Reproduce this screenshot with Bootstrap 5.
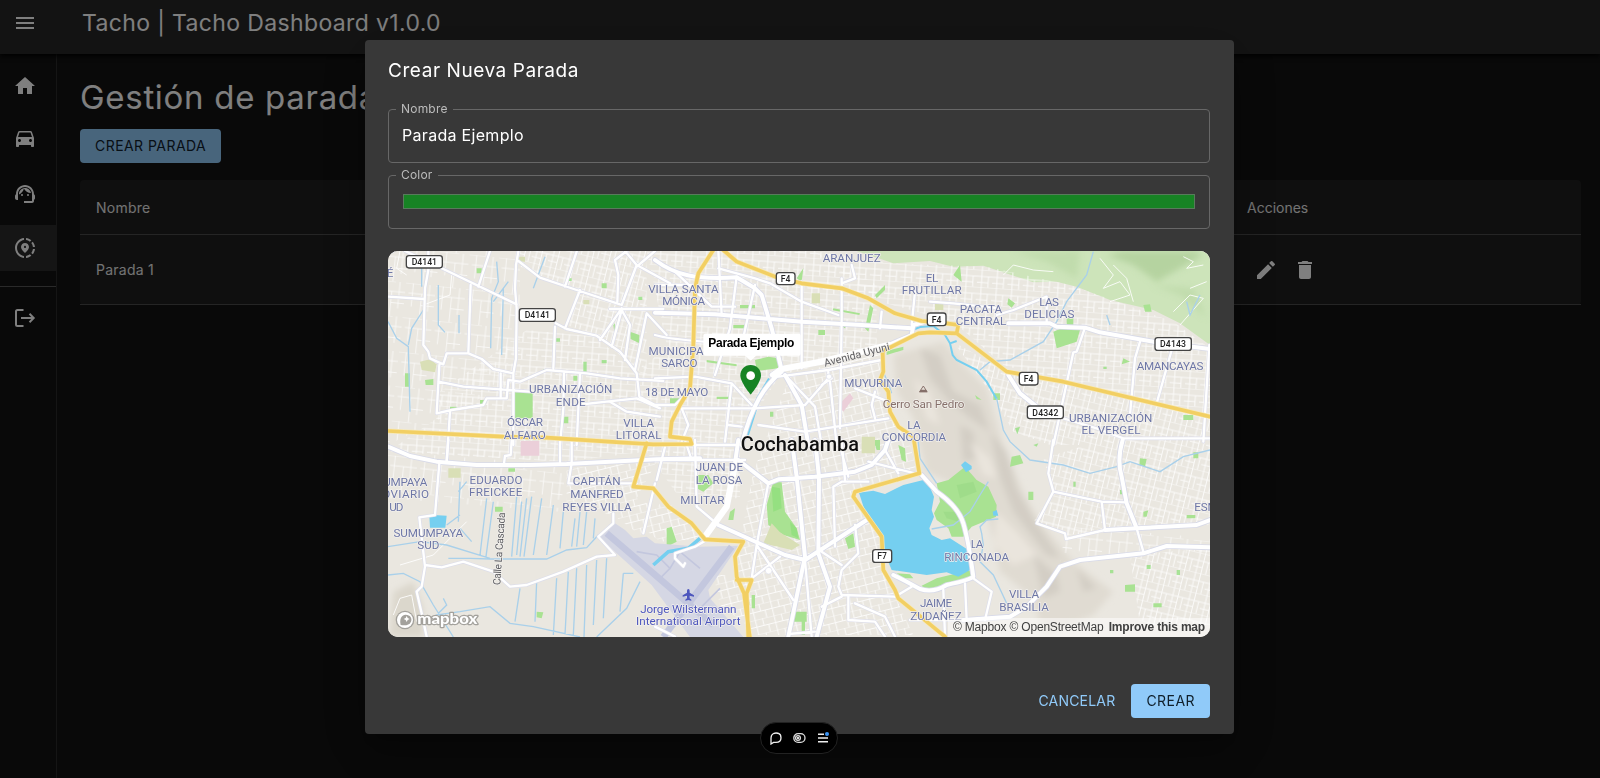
<!DOCTYPE html>
<html lang="es">
<head>
<meta charset="utf-8">
<meta name="viewport" content="width=device-width, initial-scale=1">
<title>Tacho Dashboard</title>
<link rel="stylesheet" href="https://cdn.jsdelivr.net/npm/bootstrap@5.3.0/dist/css/bootstrap.min.css">
<script defer src="https://cdn.jsdelivr.net/npm/bootstrap@5.3.0/dist/js/bootstrap.bundle.min.js"></script>
<style>
body{background:#121212;color:#fff;font-family:Inter,sans-serif;font-size:14px;height:778px;overflow:hidden}
svg{display:block;flex:none}
.topbar{height:54px;background:#272727;box-shadow:0 2px 5px #000;padding-left:13px;position:relative;z-index:1}
.brand{font-size:23px;letter-spacing:.36px;margin-left:45px;line-height:46px;height:54px;white-space:nowrap}
.shell{height:724px}
.side{width:57px;border-right:1px solid #2b2b2b;padding-top:9px;gap:8px}
.side a{height:46px;padding-left:13px;color:#fff}
.side a.on{background:#2a2a2a}
.side hr{margin:7px 0 0;border-color:#555;opacity:1;border-top-width:1px}
.page{padding:23px 19px 0 23px}
.page h1{font-size:33px;font-weight:400;line-height:41px;margin:0 0 11px;letter-spacing:.7px;white-space:nowrap}
.mbtn{border-radius:4px;border:0;font-size:14px;font-weight:400;line-height:24px;padding:5px 15px;white-space:nowrap}
.solid{background:#90caf9;color:#10202c;letter-spacing:.45px}
.ghost{color:#90caf9;background:none;letter-spacing:.2px;padding-right:16px}
.grid-t{background:#1e1e1e;border-radius:4px;margin-top:17px;height:125px;color:#e6e6e6}
.grid-t>div{padding:0 16px;border-bottom:1px solid #4a4a4a}
.grid-t .c1{width:1151px;letter-spacing:.25px}
.mask{position:fixed;inset:0;background:rgba(0,0,0,.5);z-index:5}
.dlg{position:absolute;left:365px;top:40px;width:869px;height:694px;background:#383838;border-radius:4px;padding:0 24px 16px 23px;box-shadow:0 11px 15px -7px rgba(0,0,0,.2),0 24px 38px 3px rgba(0,0,0,.14),0 9px 46px 8px rgba(0,0,0,.12)}
.dlg h2{font-size:19px;font-weight:400;line-height:24px;margin:0;padding:19px 0 26px;letter-spacing:.56px}
.field{height:54px;border:1px solid #676767;border-radius:4px;padding:0 13px;position:relative}
.field label{position:absolute;top:-10px;left:7px;padding:0 5px;background:#383838;color:#bcbcbc;font-size:12px;line-height:18px;letter-spacing:.2px}
#stopName{font-size:16px;letter-spacing:.3px;margin-top:-2px}
.swatch{height:15px;background:#178324;border:1px solid #587a5c;margin:-2px 1px 0}
.mapbox{height:386px;margin-top:22px;border-radius:10px;overflow:hidden;position:relative;background:#eae7e0}
.attrib{position:absolute;right:0;bottom:0;height:19px;padding:0 5px;background:rgba(255,255,255,.5);color:#404040;font:12px/18px "Liberation Sans",sans-serif;letter-spacing:-.19px;white-space:nowrap}
.pill{position:absolute;left:760px;top:722px;width:78px;height:32px;background:#000;border:1px solid #222;border-radius:16px;gap:11px}
.pl text{font-family:Roboto,sans-serif;font-size:35px;fill:#6e77a6;text-anchor:middle;stroke:#f3f1ee;stroke-width:4px;paint-order:stroke;stroke-linejoin:round}
.sh rect{fill:#fff;stroke:#444;stroke-width:4}
.sh text{font:500 26px Roboto,sans-serif;fill:#222;text-anchor:middle}
</style>
</head>
<body>
<header class="topbar d-flex">
 <svg width="24" height="24" viewBox="0 0 24 24" fill="#fff" style="margin-top:11px"><path d="M3 18h18v-2H3zm0-5h18v-2H3zm0-7v2h18V6z"/></svg>
 <div class="brand">Tacho | Tacho Dashboard v1.0.0</div>
</header>
<div class="shell d-flex">
 <nav class="side d-flex flex-column">
  <a class="d-flex align-items-center"><svg width="24" height="24" viewBox="0 0 24 24" fill="currentColor"><path d="M10 20v-6h4v6h5v-8h3L12 3 2 12h3v8z"/></svg></a>
  <a class="d-flex align-items-center pb-1"><svg width="24" height="24" viewBox="0 0 24 24" fill="currentColor"><path d="M18.92 6.01C18.72 5.42 18.16 5 17.5 5h-11c-.66 0-1.21.42-1.42 1.01L3 12v8c0 .55.45 1 1 1h1c.55 0 1-.45 1-1v-1h12v1c0 .55.45 1 1 1h1c.55 0 1-.45 1-1v-8zM6.5 16c-.83 0-1.5-.67-1.5-1.5S5.67 13 6.5 13s1.500.67 1.500 1.500S7.330 16 6.500 16m11 0c-.83 0-1.500-.67-1.500-1.500s.67-1.500 1.500-1.500 1.500.67 1.500 1.500-.67 1.500-1.500 1.500M5 11l1.500-4.500h11L19 11z"/></svg></a>
  <a class="d-flex align-items-center"><svg width="24" height="24" viewBox="0 0 24 24" fill="currentColor"><path d="M21 12.22C21 6.73 16.74 3 12 3c-4.69 0-9 3.65-9 9.28-.6.34-1 .98-1 1.72v2c0 1.1.9 2 2 2h1v-6.1c0-3.87 3.13-7 7-7s7 3.13 7 7V19h-8v2h8c1.1 0 2-.9 2-2v-1.22c.59-.31 1-.92 1-1.64v-2.3c0-.7-.41-1.31-1-1.62"/><circle cx="9" cy="13" r="1"/><circle cx="15" cy="13" r="1"/><path d="M18 11.03C17.52 8.18 15.04 6 12.05 6c-3.03 0-6.29 2.51-6.03 6.45 2.47-1.01 4.33-3.21 4.86-5.89 1.31 2.63 4 4.44 7.12 4.47"/></svg></a>
  <a class="d-flex align-items-center on"><svg width="24" height="24" viewBox="0 0 24 24" fill="currentColor"><path d="M13.02 19.93v2.02c2.01-.2 3.84-1 5.32-2.21l-1.42-1.43c-1.11.86-2.44 1.44-3.9 1.62M4.03 12c0-4.05 3.03-7.41 6.95-7.93V2.05C5.95 2.58 2.03 6.84 2.03 12s3.92 9.42 8.95 9.95v-2.02c-3.92-.52-6.95-3.88-6.95-7.93m15.92-1h2.02c-.2-2.01-1-3.84-2.21-5.32l-1.43 1.43c.86 1.1 1.44 2.43 1.62 3.89m-1.61-6.74c-1.48-1.21-3.32-2.01-5.32-2.21v2.02c1.46.18 2.79.76 3.9 1.62zm-.01 12.64 1.43 1.42c1.21-1.48 2.01-3.31 2.21-5.32h-2.02c-.18 1.46-.76 2.79-1.62 3.9M16 11.1C16 8.61 14.1 7 12 7s-4 1.61-4 4.1c0 1.66 1.33 3.63 4 5.9 2.67-2.27 4-4.24 4-5.9m-4 .9c-.59 0-1.07-.48-1.07-1.07 0-.59.48-1.07 1.07-1.07s1.07.48 1.07 1.07c0 .59-.48 1.07-1.07 1.07"/></svg></a>
  <hr>
  <a class="d-flex align-items-center"><svg width="24" height="24" viewBox="0 0 24 24" fill="none" stroke="currentColor" stroke-width="2"><path d="M10.500 4H4.500Q3 4 3 5.500V18.500Q3 20 4.500 20H10.500M8 12H20M16.500 7.800 20.700 12l-4.200 4.200"/></svg></a>
 </nav>
 <main class="page flex-grow-1">
  <h1>Gestión de paradas</h1>
  <button class="mbtn solid" id="newStop">CREAR PARADA</button>
  <div class="grid-t d-flex flex-column">
   <div class="d-flex align-items-center" style="height:55px"><span class="c1">Nombre</span><span>Acciones</span></div>
   <div class="d-flex align-items-center" style="height:70px"><span class="c1">Parada 1</span><span class="d-flex" style="gap:15px;padding-left:7px">
    <svg width="24" height="24" viewBox="0 0 24 24" fill="#fff"><path d="M3 17.250V21h3.750L17.810 9.940l-3.750-3.750zM20.710 7.040c.39-.39.39-1.020 0-1.410l-2.340-2.340a.996.996 0 0 0-1.410 0l-1.830 1.830 3.750 3.750z"/></svg>
    <svg width="24" height="24" viewBox="0 0 24 24" fill="#fff"><path d="M6 19c0 1.100.9 2 2 2h8c1.100 0 2-.9 2-2V7H6zM19 4h-3.500l-1-1h-5l-1 1H5v2h14z"/></svg></span></div>
  </div>
 </main>
</div>

<div class="mask">
 <section class="dlg d-flex flex-column">
  <h2>Crear Nueva Parada</h2>
  <div class="field d-flex align-items-center"><label>Nombre</label><span id="stopName">Parada Ejemplo</span></div>
  <div class="field d-flex align-items-center" style="margin-top:12px"><label>Color</label><div class="swatch flex-grow-1"></div></div>
  <div class="mapbox">
  <svg width="822" height="386" viewBox="24 18 2466 1158">
   <defs>
    <pattern id="g1" width="46" height="52" patternUnits="userSpaceOnUse" patternTransform="rotate(4)"><path d="M0 0H46M0 20H46M14 0V52M34 20V52M0 38H34" stroke="#fff" stroke-width="3" fill="none"/></pattern>
    <pattern id="g2" width="58" height="44" patternUnits="userSpaceOnUse" patternTransform="rotate(-14)"><path d="M0 0H58M0 22H58M8 0V44M30 0V22M44 22V44" stroke="#fff" stroke-width="3" fill="none"/></pattern>
    <pattern id="g3" width="50" height="60" patternUnits="userSpaceOnUse" patternTransform="rotate(14)"><path d="M0 0H50M0 24H50M0 43H28M12 0V60M28 0V60M42 24V60" stroke="#fff" stroke-width="3" fill="none"/></pattern>
    <pattern id="g4" width="90" height="104" patternUnits="userSpaceOnUse" patternTransform="rotate(6)"><path d="M0 0H60M10 30H90M22 0V70M50 30V104M72 0V80M50 64H90" stroke="#fff" stroke-width="2.500" fill="none"/></pattern>
    <filter id="soft" x="-20%" y="-20%" width="140%" height="140%"><feGaussianBlur stdDeviation="10"/></filter>
    <g id="mid">
     <path d="M24 155 132 162M145 20V75L135 130 130 300 145 320 150 340 190 358 200 325 265 325 305 342 340 372 400 385 408 340 410 190 405 130 408 60 415 20M75 18 190 72 410 178M527 235 560 252 650 272 720 320 770 385 778 455 825 480M272 120 265 325M330 18 295 125M415 48 480 98 590 135 720 178M590 20 555 125M600 135 555 250M525 245 520 370M740 18 705 45 715 90 712 170M770 60 725 180M735 18 770 60 870 115M825 18 770 65M690 192H850M725 190 660 285M725 195 695 305M725 195 750 240 735 345M800 205 765 375M178 360 170 505 215 495 310 480 320 460 380 460 385 405 420 410 500 375 620 385 720 400 850 408M175 410 250 425 450 440M362 385V455M400 385V600M552 380 550 490 540 600M600 385 590 600M210 500 200 650M24 25 40 18M590 480 680 470 770 460 840 490M690 470 740 500 840 515M800 205 860 270"/>
     <g transform="translate(0 585)"><path d="M178 70 165 225 118 232 135 380 125 440 110 455 125 520 140 590M205 0 200 65M395 0 392 45 375 48 372 70M540 0V70M575 0V70L565 130 770 130M825 130 790 280M135 375 185 382 250 365 340 395 390 440 440 435 550 395 650 350 705 345 655 290 700 250 700 220"/></g>
     <g transform="translate(825 0)"><path d="M190 70 300 100 345 115 440 170 550 210M245 95 225 250 180 390M560 100V220L555 550M440 110V370M0 270C50 285 200 295 340 300M680 200 675 250M370 395 520 375 680 345M0 400 120 395 230 415 290 480M80 490 300 490 450 480 520 400M0 480H60L100 440M230 415 210 590M60 80 170 185 240 185M520 380V400M525 410 545 600M500 420 530 400M310 540 450 560 700 520M660 440 650 480 660 520M390 390 480 485 500 600M0 120H120M200 210 190 18M300 120 260 300M590 60 600 100 560 115M600 430 700 470M80 490 100 540 80 590M220 540 260 545M780 140 770 240"/></g>
     <g transform="translate(825 585)"><path d="M0 60H270M90 15H250M340 130 305 315 290 415M120 0 125 200 190 255M90 0 110 60M550 0 580 110M540 320 535 140 560 125 640 125M600 255 610 340 560 390 550 440 560 465 720 470M305 315 415 480M375 350 290 415M500 335 560 375M450 360 470 590M400 582 480 575M580 470V540L660 545 690 590M600 490 690 530 720 590M560 0 570 120M720 470 770 440M5 120 30 20M155 300 120 320 60 340 60 355 85 380 90 370M640 65 780 100M690 30 730 100M500 500 560 470M0 560 60 590"/></g>
     <g transform="translate(1650 0)"><path d="M0 170 70 175 210 190M200 210 250 195 350 155V230M630 290 615 340 600 510M725 315 680 475M838 300 820 590M465 248 440 320 430 322 370 600M400 520 500 550 580 580H840M580 580 575 600"/></g>
     <g transform="translate(1650 585)"><path d="M130 415 185 455 165 540M370 0 355 100 370 155 515 185 590 187M370 155 320 250 405 280 408 297 525 270 620 265M515 185 525 270M105 430 110 540M40 450 45 590M-60 540 100 540M620 265 640 335"/></g>
    </g>
    <g id="big">
     <path d="M24 605 90 633 170 650 290 660 450 660 560 657 830 643 960 640"/>
     <g transform="translate(825 0)"><path d="M0 45C60 90 120 105 245 97L300 130 320 150 350 250 380 375M0 203 180 208 440 230 620 240 770 250M380 380C330 420 290 480 260 600M390 390 440 480 460 600M350 390 380 372 500 350 700 300 770 270 775 240 830 225"/></g>
     <g transform="translate(825 585)"><path d="M250 60 340 130 370 118 480 110 600 95 650 75 690 30 700 0M410 0 425 110 450 350 400 590M480 0 492 110 490 340 525 440 485 590M190 255 390 345 450 360 635 240M250 0 240 70 215 200 150 290"/></g>
     <path d="M1885 390 1920 445 1970 485M1885 235H2010L2030 245 2115 248 2160 262 2320 290 2490 312"/>
     <path d="M1625 690 1670 740Q1735 785 1750 835T1780 995Q1770 1005 1700 1020 1660 1045 1620 1032 1580 1010 1540 990"/>
     <g transform="translate(1650 585)"><path d="M100 540 240 530 290 500 350 440 390 380 450 360 640 340 710 318 840 322M578 0Q560 60 575 110L590 190 620 265 800 255 840 240M525 270 620 265"/></g>
    </g>
    <g id="hwy">
     <path d="M24 558 370 575 500 578 720 592 820 598 935 597 930 582 870 575 875 530 900 480 930 430 940 300 945 130 955 85 1000 15M800 595 760 725 820 730 865 785 935 835 975 883 1090 890 1065 935 1070 995 1092 1045 1110 1180M1070 1005H1115L1100 1045 1105 1180"/>
     <path d="M1030 15 1070 50 1185 95 1265 115 1385 130 1465 160 1545 205 1625 228 1700 235 1735 240 1730 265 1880 380 2050 410 2490 515M1730 265 1650 262 1615 265 1525 310 1508 318 1510 380 1500 405 1525 440 1530 500 1555 545 1600 575 1618 685 1425 740 1420 755 1505 875 1510 975 1545 1035 1555 1060 1695 1175"/>
    </g>
   </defs>
   <path fill="#eae7e0" d="M24 18H2490V1176H24z"/>
   <!-- relief -->
   <g filter="url(#soft)">
    <path fill="#e0dbd2" d="M1540 330 1690 290 1750 360 1820 430 1870 600 1930 740 1980 830 2080 950 2200 1040 2140 1110 1990 1176 1960 1060 1860 980 1810 760 1640 680 1600 520 1550 440z"/>
    <path fill="#d3cec5" d="M1620 310 1680 330 1720 440 1800 480 1830 560 1770 520 1700 460 1650 400zM1740 540 1780 560 1790 640 1750 650zM1830 560 1880 620 1910 730 1960 820 2040 940 2000 930 1900 800 1860 700zM1960 930 2030 990 2040 1040 1990 1060zM2090 970 2150 1030 2110 1040z"/>
    <path fill="#eae5dd" d="M1600 400 1650 440 1680 540 1640 520zM1770 590 1830 640 1850 700 1810 690zM1850 800 1910 860 1970 930 1900 960 1840 900z"/>
    <path fill="#dbd7cc" d="M40 1040 100 1010 130 1090 130 1176 30 1176z"/>
   </g>
   <path fill="#cde4ba" d="M1430 18H2490V300L2400 235 2320 195 2190 165 2090 125 2030 110 1960 112 1810 62 1720 65 1650 48 1540 55z"/>
   <g filter="url(#soft)" fill="#b5d3a0"><path d="M2180 30 2260 60 2330 110 2400 70 2470 30 2440 18H2230z"/><path d="M1900 20 2000 50 2090 100 2100 18z" opacity=".5"/><path d="M2320 120 2400 150 2480 220 2440 130z" opacity=".5"/></g>
   <!-- side streets -->
   <g opacity=".8">
    <path fill="url(#g1)" d="M440 255 650 275 770 390 860 300 800 18 1300 18 1490 120 1490 320 1200 390 1080 580 1080 760 900 760 800 620 550 650 24 620 170 520 180 440z"/>
    <path fill="url(#g3)" d="M420 18H800V400L650 270 560 240 590 140 410 60z"/>
    <path fill="url(#g2)" d="M1230 390 1500 320 1500 440 1590 600 1610 680 1420 740 1510 880 1520 1000 1600 1170 1100 1170 1070 940 1120 680z"/>
    <path fill="url(#g3)" d="M1880 380 2490 520V600H2010L1900 560 1830 440 1720 290zM1990 640 2120 600 2490 600V840L2060 870 1960 830 2020 740zM2250 930 2490 910V1140H2280z"/>
    <path fill="url(#g1)" d="M1300 18 1540 55 1820 65 2070 120 2380 230 2490 310V510L2040 410 1870 360 1720 230 1500 170z"/>
    <path fill="url(#g4)" d="M24 18H420V400L24 600zM24 620 560 660 540 800 24 760zM2060 840 2490 880V920L2040 950z"/>
    <path fill="url(#g2)" d="M850 760 990 880 840 890 790 850zM560 670 830 650 770 760 850 800 780 870 700 810 560 780zM1000 990 1070 990 1100 1140 1020 1080z"/>
   </g>
   <g fill="none" stroke="#fff" stroke-width="3" opacity=".85"><path d="M2160 40 2200 90 2170 130 2220 110 2250 150 2190 170M2200 60 2240 100 2260 170M2380 200 2430 150 2470 160 2400 240M2430 130 2480 110M2410 35 2440 50 2420 70 2470 60M60 18 50 70 80 90M130 180 210 150 215 90M1870 90 1900 60 1960 75 2020 80M40 1110 60 1060 95 1050 110 1130M60 960 160 930 260 830"/></g>
   <!-- parks -->
   <path fill="#a9e292" d="M405 442H458V520H405zM1125 345 1165 335 1195 340 1195 370 1130 378zM1180 710 1205 712 1215 800 1250 850 1260 885 1210 870 1165 840 1160 780zM1670 715 1705 705 1755 665 1790 705 1825 725 1850 780 1848 815 1775 845 1750 875 1715 875 1705 850 1670 825 1662 805 1680 770zM950 690 985 690 1000 715 970 740 950 730zM2020 260 2045 250 2100 255 2090 290 2030 310zM75 385H90V425H75zM135 405 160 402V420H137zM345 785H368V800H345zM750 260 778 270V295L752 282zM860 850 875 845 890 890 860 905zM1395 880 1420 865 1425 905 1405 912zM1080 180H1125V190H1080zM1250 100 1270 70 1265 110zM1470 180 1480 190 1465 260 1455 250zM1485 150 1515 120 1515 135 1490 160zM1360 190 1440 205 1438 210 1358 196zM1315 255H1335V270H1315zM1060 240H1100V250H1060zM980 345 1070 358 1070 364 980 352zM1720 90 1740 60 1745 110zM1885 160 1905 175 1895 188 1882 178zM1520 318 1570 305 1570 315 1520 330zM1480 585H1500V615H1490zM1055 455H1010V462H1055zM870 460H900V478H870zM1555 600 1575 610 1578 650 1565 645zM1115 1050H1125V1090H1115zM1550 985 1590 988 1600 1000 1570 1000zM1625 1022 1670 1000 1710 990 1775 975V1000L1700 1015 1640 1040zM2280 640 2300 642 2295 665 2278 660zM1945 740H1960V765H1945zM2235 1020 2265 1018V1040H2235zM2420 810H2446V820H2420zM2290 800 2305 796 2300 815H2290zM2320 1075H2345V1087H2320zM2440 622H2455V640H2440zM2410 510H2440V525H2410zM2230 340 2250 350 2225 358zM1785 450 1805 465 1790 462zM1840 445H1860V465H1840zM2290 180 2310 178 2315 200 2295 200zM2060 220H2080V240H2060zM290 70H305V85H290zM665 115H680V130H665zM550 515H565V535H550zM580 392H592V407H580zM470 1100 490 1102 485 1120 470 1117zM945 920 965 915 970 930 950 940zM385 670H405V680H385zM1230 1100H1280V1130H1230zM1265 1130H1275V1170H1265zM1050 800 1065 790 1060 825 1045 825zM210 485H230V492H210zM300 465H312V478H300zM1895 635 1920 630 1930 655 1890 665z"/>
   <path fill="#9ad985" opacity=".6" d="M1730 720 1780 710 1790 740 1740 760zM1690 800 1740 800 1735 830 1700 820z"/>
   <g fill="#8fdf7b" opacity=".75"><path d="M1175 725 1200 730 1205 790 1180 800zM1230 830 1250 850 1255 880 1235 870zM665 345H680V355H665zM490 372H500V380H490zM610 350H620V380H610zM520 280H540V290H520zM775 155H787V165H775zM560 100H575V108H560zM700 240 705 235 703 260zM1305 650H1315V665H1305zM1380 240 1400 238 1395 250zM1170 500H1180V515H1170zM2170 365H2180V372H2170zM2220 735H2230V748H2220zM2080 710H2087V725H2080zM2390 975H2400V990H2390zM2300 960H2312V972H2300zM2190 975H2200V985H2190zM1960 600 1975 595 1970 605zM1905 550 1920 545 1912 568z"/></g>
   <path fill="#d9dfb6" d="M120 350 150 343 170 358 165 382 125 375zM1175 835 1200 862 1260 900 1235 915 1150 895zM205 670H242V698H205zM415 35H435V50H415zM1445 575H1485V625H1445zM1295 145H1320V175H1295zM610 165H628V178H610zM1665 170H1690V195H1665zM1095 1070H1110V1080H1095z"/>
   <path fill="#ebcfd9" d="M422 588H478V632H422zM1375 480 1410 445 1420 460 1390 500z"/>
   <!-- airport -->
   <path fill="#d5d7e4" d="M655 875 705 835 735 855 760 880 800 875 825 895 960 905 1075 902 985 1035 990 1060 1090 1176H930L815 1020z"/>
   <path fill="none" stroke="#c3c7de" stroke-width="20" d="M680 865 1000 1140M1055 905 850 1176"/>
   <path fill="none" stroke="#c3c7de" stroke-width="5" d="M770 920 830 930 870 970 900 920 960 970M870 970 840 1000M960 1090 1020 1030"/>
   <!-- water -->
   <path fill="#75cff0" d="M1437 743 1480 737 1515 747 1570 720 1630 705 1645 715 1662 755 1655 795 1662 815 1648 850 1655 870 1685 885 1710 880 1765 915 1770 975 1735 995 1700 982 1640 990 1535 975 1510 915 1505 875 1460 815zM1743 660 1755 649 1775 663 1775 672 1758 682zM148 812 160 810 200 812 196 848H150zM1838 800 1850 795 1855 812 1840 812z"/>
   <g fill="none" stroke="#75cff0"><path stroke-width="13" d="M1170 402 1135 460 1100 570"/><path stroke-width="11" d="M820 960 865 920 925 910 960 880"/><path stroke-width="6" d="M1695 270 1710 295 1718 330 1730 345 1790 375 1820 410 1850 462M1590 258 1620 246 1660 243 1695 270M1710 295 1730 288"/></g>
   <g fill="none" stroke="#a9d0ea" stroke-width="4"><path d="M2140 20 2120 90 2060 170 2030 230 1990 290 1890 345 1830 350 1800 375M1850 460 1870 555 1890 590 1950 645 2050 660 2130 685 2210 665 2250 650 2340 680 2410 635 2490 615M1805 865 1800 845 1820 825 1855 822M1805 865 1810 900 1800 950 1840 990 1880 1075M1825 710 1800 750 1770 800 1720 840 1655 852M1615 590 1620 640 1670 715M1510 380 1530 430 1535 445"/><path d="M24 230 50 280 85 305 90 500M85 300 95 250 130 195M175 120V240L195 262M125 70V125M237 210V265M350 50 355 110 335 160 332 310M370 130 365 330M385 110 340 170M495 35 460 130M24 990 70 985 120 1010 160 1080 220 1176M205 940H270L330 942 500 942 560 915 620 908 655 870M320 760 300 930M340 770 318 935M410 755 395 935M425 770 410 930M440 760 420 935M455 755 432 935M485 760 460 930M520 780 500 930M550 800 540 910M585 820 575 905M600 800 590 905M620 800 610 900M645 820 640 880M420 1030 405 1130M470 1010 465 1130M530 1000 520 1170M565 980 555 1170M590 970 580 1170M620 960 612 1176M650 945 640 1140M680 940 670 1120M730 985 720 1100M780 1010 740 1090 650 1176M730 985H760M190 1060 200 1080 170 1110 240 1100 330 1085 390 1135 460 1145 600 1176M240 710 235 830M235 740 260 710M200 840 240 810M240 850 275 890M24 905 120 890 200 900 330 940M2180 210 2190 240M2420 170 2430 210 2460 150"/></g>
   <!-- roads -->
   <g fill="none" stroke-linejoin="round" stroke-linecap="round">
    <use href="#mid" stroke="#dddeea" stroke-width="11"/><use href="#big" stroke="#d8dae8" stroke-width="17"/>
    <use href="#mid" stroke="#fff" stroke-width="7"/><use href="#big" stroke="#fff" stroke-width="12"/>
    <path stroke="#fff" stroke-width="19" d="M1180 390 1205 372 1325 350 1525 300M1065 660 1040 785 975 875"/>
    <use href="#hwy" stroke="#f7e9b8" stroke-width="15"/><use href="#hwy" stroke="#f2cf63" stroke-width="11"/>
   </g>
   <g fill="#fff" stroke="#dddeea" stroke-width="2"><circle cx="1347" cy="395" r="8"/><circle cx="1166" cy="977" r="10"/></g>
   <!-- place names -->
   <g class="pl">
    <text x="30" y="95">É</text>
    <text x="572" y="444" textLength="250">URBANIZACIÓN</text><text x="572" y="482" textLength="90">ENDE</text>
    <text x="435" y="543" textLength="108">ÓSCAR</text><text x="434" y="582" textLength="126">ALFARO</text>
    <text x="910" y="143" textLength="211">VILLA SANTA</text><text x="911" y="181" textLength="129">MÓNICA</text>
    <text x="888" y="330" textLength="165">MUNICIPA</text><text x="898" y="367" textLength="109">SARCO</text>
    <text x="890" y="453" textLength="190">18 DE MAYO</text>
    <text x="776" y="545" textLength="92">VILLA</text><text x="776" y="583" textLength="137">LITORAL</text>
    <text x="1415" y="52" textLength="174">ARANJUEZ</text><text x="1656" y="110" textLength="38">EL</text><text x="1655" y="147" textLength="180">FRUTILLAR</text>
    <text x="1803" y="203" textLength="127">PACATA</text><text x="1803" y="240" textLength="152">CENTRAL</text>
    <text x="2007" y="182" textLength="59">LAS</text><text x="2008" y="219" textLength="150">DELICIAS</text>
    <text x="2370" y="374" textLength="200">AMANCAYAS</text><text x="2192" y="530" textLength="250">URBANIZACIÓN</text><text x="2193" y="568" textLength="177">EL VERGEL</text>
    <text x="1480" y="427" textLength="174">MUYURINA</text><text x="1602" y="552" textLength="40">LA</text><text x="1602" y="588" textLength="193">CONCORDIA</text>
    <text x="1631" y="490" textLength="245" style="fill:#86706a">Cerro San Pedro</text>
    <text x="348" y="717" textLength="159">EDUARDO</text><text x="347" y="754" textLength="160">FREICKEE</text>
    <text x="650" y="720" textLength="143">CAPITÁN</text><text x="651" y="759" textLength="160">MANFRED</text><text x="651" y="797" textLength="208">REYES VILLA</text>
    <text x="145" y="876" textLength="209">SUMUMPAYA</text><text x="145" y="913" textLength="66">SUD</text>
    <text x="76" y="722" textLength="132">UMPAYA</text><text x="77" y="759" textLength="140">OVIARIO</text><text x="49" y="797" textLength="43">UD</text>
    <text x="1018" y="679" textLength="142">JUAN DE</text><text x="1017" y="717" textLength="140">LA ROSA</text><text x="967" y="776" textLength="132">MILITAR</text>
    <text x="1791" y="910" textLength="38">LA</text><text x="1790" y="948" textLength="195">RINCONADA</text>
    <text x="1932" y="1058" textLength="90">VILLA</text><text x="1932" y="1097" textLength="149">BRASILIA</text>
    <text x="1668" y="1087" textLength="96">JAIME</text><text x="1668" y="1124" textLength="154">ZUDAÑEZ</text><text x="2478" y="798" textLength="70">ESM</text>
    <text x="925" y="1105" textLength="289" style="fill:#4d56bd">Jorge Wilstermann</text><text x="925" y="1141" textLength="314" style="fill:#4d56bd">International Airport</text>
    <text transform="translate(1433 340) rotate(-14.500)" textLength="202" style="fill:#5c5c60;font-size:32px">Avenida Uyuni</text>
    <text transform="translate(368 912) rotate(-86)" textLength="218" style="fill:#5c5c60;font-size:31px">Calle La Cascada</text>
    <text x="1260" y="617" textLength="355" lengthAdjust="spacingAndGlyphs" style="fill:#111;font-size:63px;font-weight:500">Cochabamba</text>
   </g>
   <path fill="none" stroke="#86706a" stroke-width="3" d="M1619 440 1630 423 1641 440z"/><path fill="#86706a" d="M1617 442 1622 434H1638L1643 442z"/>
   <path fill="#4d56bd" d="M925 1032q-4 0-4 5v6l-13 8v4l13-3v8l-5 4v3l9-2 9 2v-3l-5-4v-8l13 3v-4l-13-8v-6q0-5-4-5z"/>
   <g class="sh">
    <rect x="79" y="32" width="108" height="37" rx="8"/><text x="133" y="60" textLength="76">D4141</text>
    <rect x="418" y="191" width="108" height="38" rx="8"/><text x="472" y="220" textLength="76">D4141</text>
    <rect x="1189" y="83" width="56" height="36" rx="8"/><text x="1217" y="111">F4</text>
    <rect x="1642" y="204" width="56" height="38" rx="8"/><text x="1670" y="233">F4</text>
    <rect x="2325" y="278" width="109" height="38" rx="8"/><text x="2379" y="307" textLength="78">D4143</text>
    <rect x="1918" y="382" width="56" height="38" rx="8"/><text x="1946" y="411">F4</text>
    <rect x="1942" y="483" width="108" height="38" rx="8"/><text x="1996" y="512" textLength="78">D4342</text>
    <rect x="1478" y="914" width="57" height="38" rx="8"/><text x="1506" y="943">F7</text>
   </g>
   <!-- stop marker -->
   <rect x="970" y="266" width="292" height="66" rx="6" fill="#fff"/>
   <path fill="#fff" d="M1094 331h36l-18 16z"/>
   <text x="1114" y="307" text-anchor="middle" textLength="258" style="font:bold 36px 'Liberation Sans',sans-serif">Parada Ejemplo</text>
   <path fill="#178324" d="M1112 360c-18 0-31 14-31 31 0 22 31 58 31 58s31-36 31-58c0-17-13-31-31-31"/><circle cx="1112" cy="392" r="13" fill="#fff"/>
   <!-- provider logo -->
   <circle cx="75" cy="1125" r="28" fill="#a3a19c"/><circle cx="75" cy="1125" r="24" fill="#fff"/><path fill="#a3a19c" d="M62 1140c-4-16 1-30 15-31 14 0 20 11 16 21-5 11-17 12-31 10"/><path fill="#fff" d="m80 1113 3 6 6 3-6 3-3 6-3-6-6-3 6-3z"/>
   <text x="112" y="1136" textLength="180" lengthAdjust="spacingAndGlyphs" style="font:900 43px Lato,sans-serif;fill:#fff;stroke:#a3a19c;stroke-width:7px;paint-order:stroke;stroke-linejoin:round">mapbox</text>
  </svg>
  <div class="attrib">© Mapbox © OpenStreetMap <b style="margin-left:2px">Improve this map</b></div>
  </div>
  <div class="d-flex justify-content-end mt-auto"><button class="mbtn ghost" id="cancelBtn">CANCELAR</button><button class="mbtn solid" id="createBtn">CREAR</button></div>
 </section>
 <div class="pill d-flex align-items-center justify-content-center">
  <svg width="12" height="13" viewBox="0 0 12 13" fill="none" stroke="#eee" stroke-width="1.300"><path d="M1 12V6C1 3 3 1 6 1s5 2 5 4.700S9 10.400 6 10.400H3.500z"/></svg>
  <svg width="13" height="12" viewBox="0 0 13 12" fill="none" stroke="#ddd" stroke-width="1.300"><rect x=".8" y="1.700" width="11.200" height="8.600" rx="4.300"/><circle cx="5" cy="6" r="2.400"/><circle cx="5" cy="6" r=".6"/></svg>
  <svg width="12" height="12" viewBox="0 0 12 12"><path d="M1 2.200H7M1 6H11M1 9.800H11" stroke="#eee" stroke-width="1.500"/><circle cx="10" cy="2" r="2" fill="#3c94f5"/></svg>
 </div>
</div>
</body>
</html>
